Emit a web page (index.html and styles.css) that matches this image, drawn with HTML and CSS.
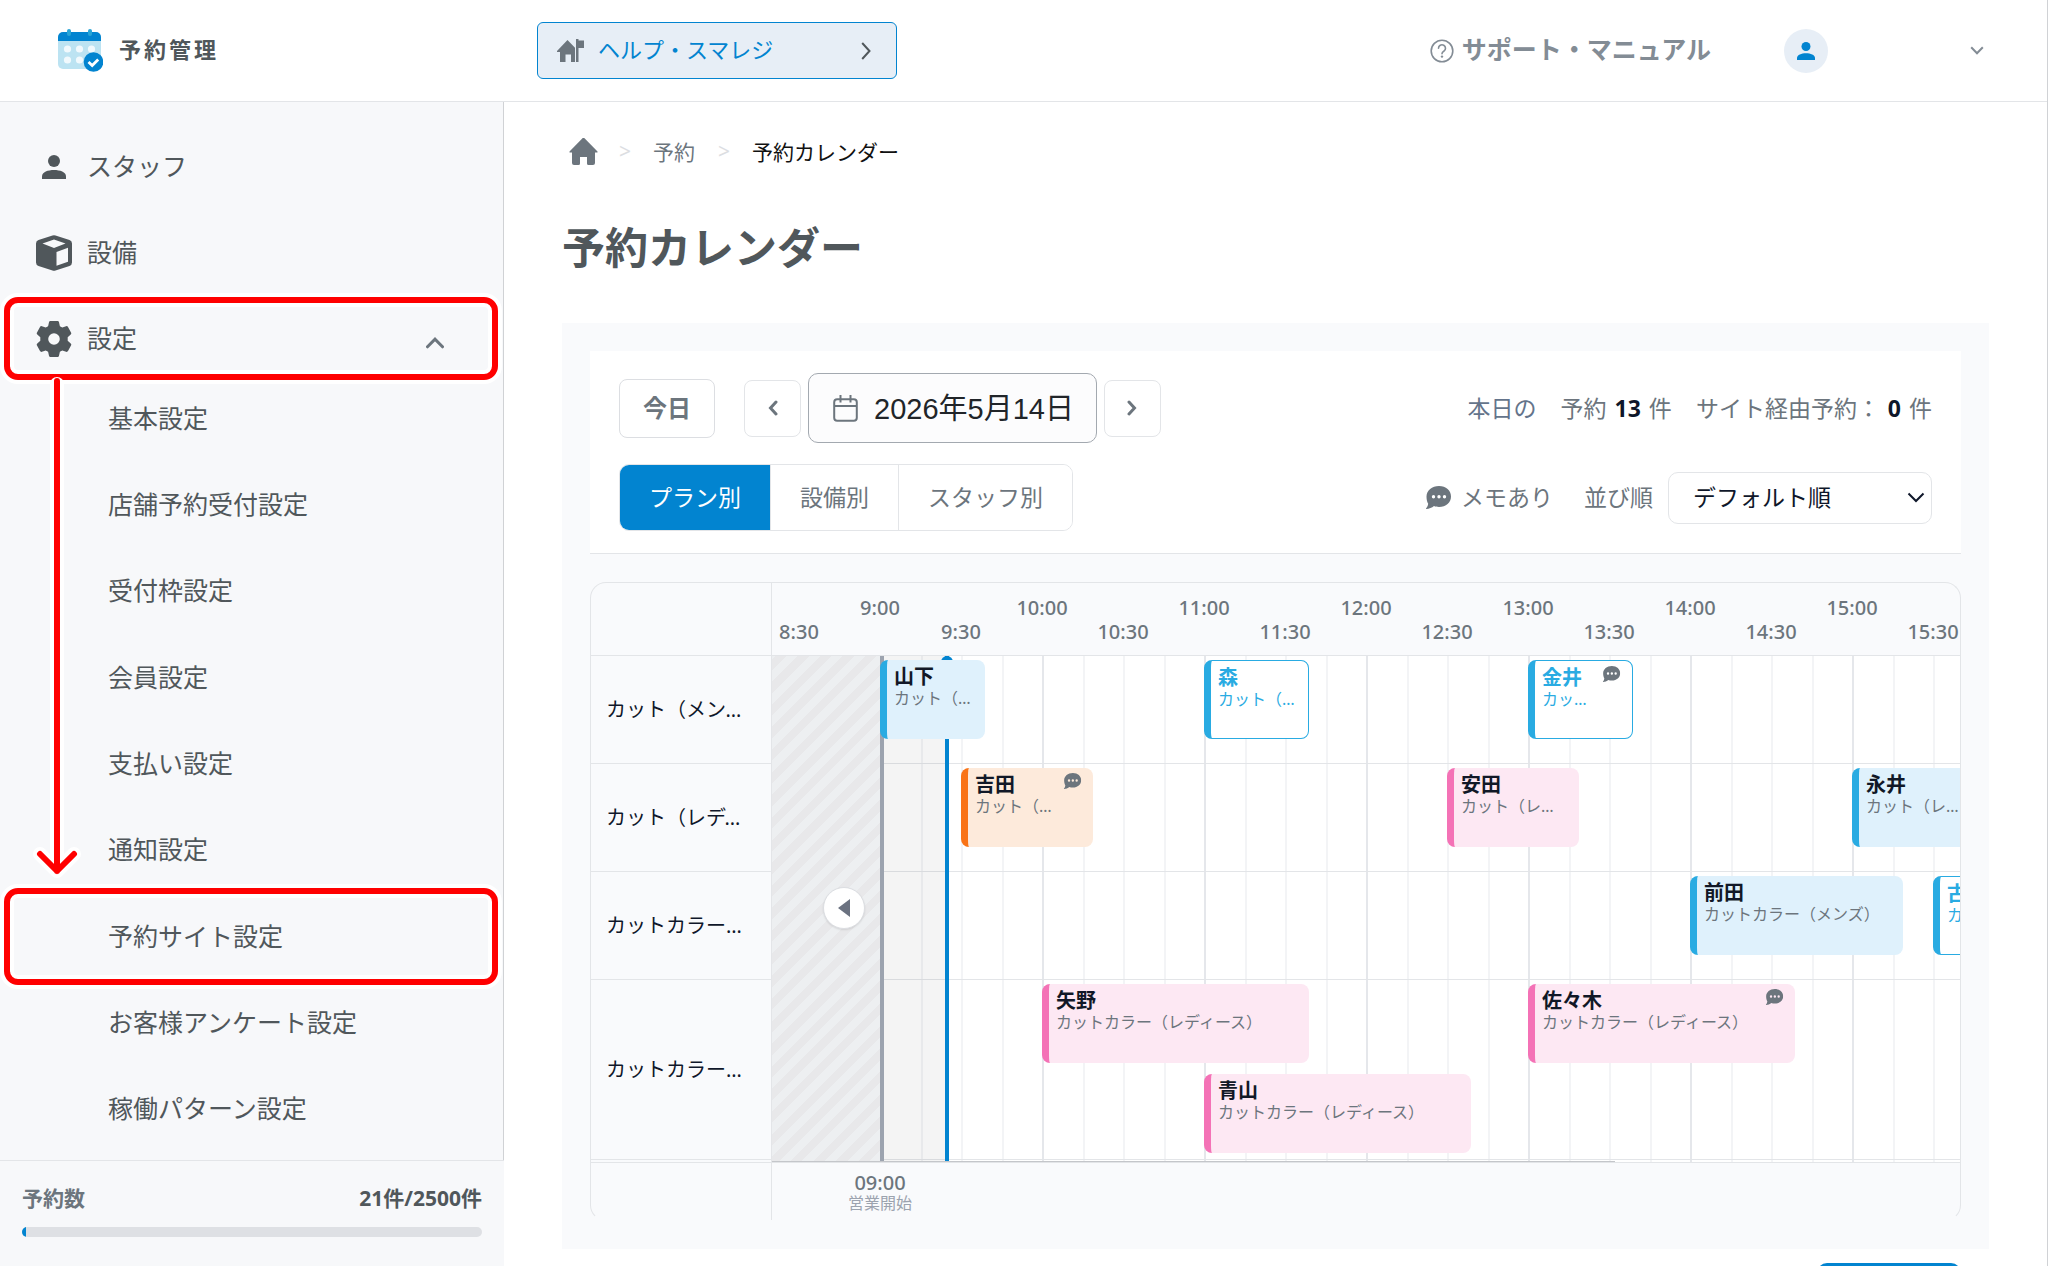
FILE: index.html
```html
<!DOCTYPE html>
<html lang="ja">
<head>
<meta charset="utf-8">
<title>予約カレンダー</title>
<link rel="stylesheet" href="styles.css">
</head>
<body>
<svg class="defs" width="0" height="0" aria-hidden="true">
  <symbol id="i-person" viewBox="0 0 24 24"><circle cx="12" cy="6" r="6"/><path d="M0 24v-2.600C0 17 6 15 12 15s12 2 12 6.400V24z"/></symbol>
  <symbol id="i-home" viewBox="0 0 29 27"><path d="M13 .7a2 2 0 0 1 3 0L28.500 13.500v1H26V25a2 2 0 0 1-2 2h-4.500a1.500 1.500 0 0 1-1.500-1.500V19h-7v6.500A1.500 1.500 0 0 1 9.500 27H5a2 2 0 0 1-2-2V14.500H.5v-1z"/></symbol>
  <symbol id="i-memo" viewBox="0 0 25 23"><path fill-rule="evenodd" d="M13 0c7 0 12 4.500 12 10.500S20 21 13 21c-2 0-3.500-.3-5-.9C6 21.800 3 23 .3 23c-.4 0-.4-.5-.1-.8 1-1.100 1.800-2.700 2-4.400C1 15.800.5 13.200.5 10.500.5 4.500 6 0 13 0zM7.500 9a1.700 1.700 0 1 0 0 3.400 1.700 1.700 0 0 0 0-3.400zM13 9a1.700 1.700 0 1 0 0 3.400A1.700 1.700 0 0 0 13 9zm5.500 0a1.700 1.700 0 1 0 0 3.400 1.700 1.700 0 0 0 0-3.400z"/></symbol>
</svg>

<header class="topbar">
  <a class="brand" href="#">
    <svg class="brand-icon" viewBox="0 0 45 43" aria-hidden="true">
      <rect x="0" y="4" width="43" height="36" rx="5" fill="#bce3f2"/>
      <path d="M0 12V8a5 5 0 0 1 5-5h33a5 5 0 0 1 5 5v4z" fill="#0284d0"/>
      <rect x="9" y="0" width="4" height="7" rx="2" fill="#2aa5d6"/>
      <rect x="30" y="0" width="4" height="7" rx="2" fill="#2aa5d6"/>
      <g fill="#f1f9fd"><circle cx="9.500" cy="20" r="3.600"/><circle cx="21.500" cy="20" r="3.600"/><circle cx="33.500" cy="20" r="3.600"/><circle cx="9.500" cy="31" r="3.600"/><circle cx="21.500" cy="31" r="3.600"/></g>
      <circle cx="35.500" cy="33" r="9.800" fill="#0284d0"/>
      <path d="M30.500 33l3.700 3.500 6-6" fill="none" stroke="#fff" stroke-width="2.800"/>
    </svg>
    <span class="brand-name">予約管理</span>
  </a>
  <button class="shop" type="button">
    <svg class="shop-icon" viewBox="0 0 27 23" aria-hidden="true"><path d="M10.500 1L18 8.800V23h-4v-7.500H8.500V23H3V13H0v-1z"/><path d="M19 0h2.500v1.500H27V9h-5.500v14H19z"/></svg>
    <span class="shop-name">ヘルプ・スマレジ</span>
    <svg class="shop-arrow" viewBox="0 0 10 18" aria-hidden="true"><path d="M1.200 1l7.300 8-7.300 8"/></svg>
  </button>
  <a class="support" href="#">
    <svg class="support-icon" viewBox="0 0 24 24" aria-hidden="true"><circle cx="12" cy="12" r="10.800"/><path d="M8.500 9.300a3.500 3.500 0 1 1 5.300 3c-1.200.7-1.800 1.200-1.800 2.500"/><circle class="dot" cx="12" cy="17.600" r="1.200"/></svg>
    <span class="support-name">サポート・マニュアル</span>
  </a>
  <button class="account" type="button" aria-label="アカウント">
    <span class="avatar"><svg viewBox="0 0 24 24" aria-hidden="true"><use href="#i-person"/></svg></span>
    <svg class="caret" viewBox="0 0 14 9" aria-hidden="true"><path d="M1.200 1.200L7 7.200l5.800-6"/></svg>
  </button>
</header>

<div class="layout">
  <aside class="sidebar">
    <nav class="menu">
      <a class="item" href="#"><span class="item-icon"><svg class="i24" viewBox="0 0 24 24" aria-hidden="true"><use href="#i-person"/></svg></span>スタッフ</a>
      <a class="item" href="#"><span class="item-icon"><svg class="i36" viewBox="0 0 36 36" aria-hidden="true"><path fill-rule="evenodd" d="M16.500.4a5 5 0 0 1 3 0L33.500 5A3.600 3.600 0 0 1 36 8.400v19.200a3.600 3.600 0 0 1-2.500 3.400l-14 4.600a5 5 0 0 1-3 0L2.500 31A3.600 3.600 0 0 1 0 27.600V8.400A3.600 3.600 0 0 1 2.500 5zM18 4.500L6.500 8.500 18 13l11.500-4.500zM20.500 17v13.700L32 26.800V12.700z"/></svg></span>設備</a>
      <a class="item item-open" href="#" aria-expanded="true"><span class="item-icon"><svg class="i36" viewBox="0 0 36 36" aria-hidden="true"><path fill-rule="evenodd" d="M14.500 0h7a1.500 1.500 0 0 1 1.500 1.200l.9 4 2.400 1.300 3.800-1.300a1.600 1.600 0 0 1 1.900.7l3 5.600a1.600 1.600 0 0 1-.3 2l-3 2.800v3.400l3 2.800a1.600 1.600 0 0 1 .3 2l-3 5.600a1.600 1.600 0 0 1-1.900.7l-3.800-1.300-2.400 1.300-.9 4a1.500 1.500 0 0 1-1.500 1.200h-7a1.500 1.500 0 0 1-1.500-1.200l-.9-4-2.400-1.300-3.800 1.300a1.600 1.600 0 0 1-1.900-.7l-3-5.600a1.600 1.600 0 0 1 .3-2l3-2.800v-3.400l-3-2.800a1.600 1.600 0 0 1-.3-2l3-5.600a1.600 1.600 0 0 1 1.900-.7l3.800 1.300 2.400-1.300.9-4A1.500 1.500 0 0 1 14.500 0zM18 12.200a5.800 5.800 0 1 0 0 11.600 5.800 5.800 0 0 0 0-11.600z"/></svg></span>設定<svg class="item-caret" viewBox="0 0 18 12" aria-hidden="true"><path d="M1.500 9.800L9 2.200l7.500 7.600"/></svg><span class="mark"></span></a>
      <div class="submenu">
        <a href="#">基本設定</a>
        <a href="#">店舗予約受付設定</a>
        <a href="#">受付枠設定</a>
        <a href="#">会員設定</a>
        <a href="#">支払い設定</a>
        <a href="#">通知設定</a>
        <a href="#">予約サイト設定<span class="mark"></span></a>
        <a href="#">お客様アンケート設定</a>
        <a href="#">稼働パターン設定</a>
        <svg class="arrow" viewBox="0 0 50 508" aria-hidden="true">
          <path class="arrow-halo" d="M25 9v487M8 479l17 17 17-17"/>
          <path class="arrow-line" d="M25 6v490M8 479l17 17 17-17"/>
        </svg>
      </div>
    </nav>
    <div class="usage">
      <div class="usage-row"><span class="usage-label">予約数</span><span class="usage-value">21件/2500件</span></div>
      <div class="bar"><div class="bar-fill" style="width:0.84%"></div></div>
    </div>
  </aside>

  <main class="main">
    <nav class="crumbs" aria-label="パンくず">
      <a class="crumb-home" href="#" aria-label="ホーム"><svg viewBox="0 0 29 27" aria-hidden="true"><use href="#i-home"/></svg></a>
      <span class="sep">&gt;</span>
      <a class="crumb-link" href="#">予約</a>
      <span class="sep">&gt;</span>
      <span class="crumb-now">予約カレンダー</span>
    </nav>
    <h1>予約カレンダー</h1>

    <section class="panel">
      <div class="tools">
        <div class="tools-row">
          <button class="btn today" type="button">今日</button>
          <div class="date-nav">
            <button class="btn step" type="button" aria-label="前の日"><svg viewBox="0 0 10 16" aria-hidden="true"><path d="M8 2L2.500 8 8 14"/></svg></button>
            <button class="btn date" type="button"><svg viewBox="0 0 25 27" aria-hidden="true"><rect x="1.200" y="4.200" width="22.600" height="21.600" rx="3"/><path d="M1.200 11h22.600M7.500 0v7.500M17.500 0v7.500"/></svg><span>2026年5月14日</span></button>
            <button class="btn step" type="button" aria-label="次の日"><svg viewBox="0 0 10 16" aria-hidden="true"><path d="M2 2l5.500 6L2 14"/></svg></button>
          </div>
          <div class="stats">
            <span class="stats-day">本日の</span>
            <span>予約 <b>13</b> 件</span>
            <span>サイト経由予約： <b>0</b> 件</span>
          </div>
        </div>
        <div class="tools-row">
          <div class="tabs">
            <button class="active" type="button">プラン別</button>
            <button type="button">設備別</button>
            <button type="button">スタッフ別</button>
          </div>
          <div class="filters">
            <span class="memo-key"><svg viewBox="0 0 25 23" aria-hidden="true"><use href="#i-memo"/></svg><span>メモあり</span></span>
            <label for="order">並び順</label>
            <span class="select">
              <select id="order"><option>デフォルト順</option></select>
              <svg viewBox="0 0 18 11" aria-hidden="true"><path d="M1.500 1.500L9 9l7.500-7.500"/></svg>
            </span>
          </div>
        </div>
      </div>

      <div class="board">
        <div class="corner"></div>
        <div class="hours">
          <span class="half c1">8:30</span><span class="c4">9:00</span><span class="half c7">9:30</span><span class="c10">10:00</span><span class="half c13">10:30</span><span class="c16">11:00</span><span class="half c19">11:30</span><span class="c22">12:00</span><span class="half c25">12:30</span><span class="c28">13:00</span><span class="half c31">13:30</span><span class="c34">14:00</span><span class="half c37">14:30</span><span class="c40">15:00</span><span class="half c43">15:30</span>
        </div>

        <div class="labels">
          <div class="label"><span>カット（メンズ）</span></div>
          <div class="label"><span>カット（レディース）</span></div>
          <div class="label"><span>カットカラー（メンズ）</span></div>
          <div class="label tall"><span>カットカラー（レディース）</span></div>
        </div>

        <div class="lanes">
          <div class="lane">
            <article class="event blue c5 w4"><h2>山下</h2><p>カット（メンズ）</p></article>
            <article class="event open c17 w4"><h2>森</h2><p>カット（メンズ）</p></article>
            <article class="event open memo c29 w4"><h2>金井</h2><p>カット（メンズ）</p><svg viewBox="0 0 25 23" aria-label="メモあり"><use href="#i-memo"/></svg></article>
          </div>
          <div class="lane">
            <article class="event orange memo c8 w5"><h2>吉田</h2><p>カット（レディース）</p><svg viewBox="0 0 25 23" aria-label="メモあり"><use href="#i-memo"/></svg></article>
            <article class="event pink c26 w5"><h2>安田</h2><p>カット（レディース）</p></article>
            <article class="event blue c41 w5"><h2>永井</h2><p>カット（レディース）</p></article>
          </div>
          <div class="lane">
            <article class="event blue c35 w8"><h2>前田</h2><p>カットカラー（メンズ）</p></article>
            <article class="event open c44 w8"><h2>古川</h2><p>カットカラー（メンズ）</p></article>
          </div>
          <div class="lane tall">
            <article class="event pink c11 w10"><h2>矢野</h2><p>カットカラー（レディース）</p></article>
            <article class="event pink memo c29 w10"><h2>佐々木</h2><p>カットカラー（レディース）</p><svg viewBox="0 0 25 23" aria-label="メモあり"><use href="#i-memo"/></svg></article>
            <article class="event pink second c17 w10"><h2>青山</h2><p>カットカラー（レディース）</p></article>
          </div>
          <div class="closed"></div>
          <div class="past"></div>
          <div class="now"></div>
          <button class="back" type="button" aria-label="前の時間帯"><svg viewBox="0 0 12 18" aria-hidden="true"><path d="M12 0v18L0 9z"/></svg></button>
          <div class="scroll"></div>
        </div>

        <div class="foot-corner"></div>
        <div class="foot">
          <div class="opening"><strong>09:00</strong><span>営業開始</span></div>
        </div>
      </div>
    </section>
    <div class="actions"><button class="primary" type="button" aria-label="予約を追加"></button></div>
  </main>
</div>
</body>
</html>
```

FILE: styles.css
```css
*, *::before, *::after { box-sizing: border-box; }

body {
  margin: 0;
  height: 100vh;
  overflow: hidden;
  display: flex;
  flex-direction: column;
  border-right: 1px solid #d0d2d5;
  background: #fff;
  color: #50575b;
  font-family: "Noto Sans", "Noto Sans CJK JP", sans-serif;
}
a { color: inherit; text-decoration: none; }
button, select { font: inherit; color: inherit; cursor: pointer; padding: 0; }
h1, h2, p { margin: 0; }
svg { display: block; flex: none; fill: currentColor; }
.defs { position: absolute; }

/* top bar */
.topbar {
  flex: none;
  display: flex;
  align-items: center;
  height: 102px;
  border-bottom: 1px solid #e3e5e8;
}
.brand { flex: none; width: 537px; padding-left: 58px; display: flex; align-items: center; gap: 16px; }
.brand-icon { width: 45px; height: 43px; }
.brand-name { font-size: 22px; font-weight: 700; letter-spacing: 3px; }
.brand-name, .shop-name, .support-name { padding-bottom: 5px; }
.shop {
  display: flex;
  align-items: center;
  width: 360px;
  height: 57px;
  padding: 0 25px 0 19px;
  border: 1px solid #0284d0;
  border-radius: 6px;
  background: #e7eef6;
  color: #0284d0;
  font-size: 22px;
  text-align: left;
}
.shop-name { flex: 1; margin-left: 14px; }
.shop-icon { width: 27px; height: 23px; color: #6c757d; }
.shop-arrow { width: 10px; height: 18px; fill: none; stroke: #50575b; stroke-width: 2; }
.support {
  margin-left: auto;
  display: flex;
  align-items: center;
  gap: 8px;
  color: #838c95;
  font-size: 25px;
  font-weight: 700;
}
.support-icon { width: 24px; height: 24px; fill: none; stroke: currentColor; stroke-width: 1.6; stroke-linecap: round; }
.support-icon .dot { fill: currentColor; stroke: none; }
.account {
  display: flex;
  align-items: center;
  justify-content: space-between;
  width: 200px;
  margin: 0 63px 0 73px;
  border: 0;
  background: none;
}
.avatar {
  display: grid;
  place-items: center;
  width: 44px;
  height: 44px;
  border-radius: 50%;
  background: #e7eef6;
  color: #0284d0;
}
.avatar svg { width: 18px; height: 18px; }
.caret { width: 14px; height: 9px; fill: none; stroke: #838c95; stroke-width: 2; }

/* page columns */
.layout { flex: 1; min-height: 0; display: flex; }

/* sidebar */
.sidebar { flex: none; width: 504px; display: flex; flex-direction: column; background: #f7f8fa; }
.menu {
  flex: 1;
  min-height: 0;
  display: flex;
  flex-direction: column;
  padding: 28px 0 8px;
  border-right: 1px solid #d0d2d5;
  font-size: 25px;
}
.item { position: relative; flex: none; display: flex; align-items: center; height: 72px; margin-bottom: 14px; padding: 0 0 2px 36px; }
.item-open { margin-bottom: 1px; }
.item-icon { display: grid; place-items: center; width: 36px; margin: 3px 15px 0 0; }
.i24 { width: 24px; height: 24px; }
.i36 { width: 36px; height: 36px; }
.item-caret { width: 18px; height: 12px; margin: 11px 59px 0 auto; fill: none; stroke: #6c757d; stroke-width: 3; stroke-linecap: round; }
.submenu { position: relative; flex: 1; min-height: 0; display: flex; flex-direction: column; }
.submenu a { position: relative; flex: 1; display: flex; align-items: center; padding: 0 0 3px 108px; }
.mark {
  position: absolute;
  inset: -5px 5px -6px 4px;
  border: 6px solid #f00;
  border-radius: 14px;
  box-shadow: 0 0 0 4px #fff, inset 0 0 0 4px #fff;
}
.arrow { position: absolute; left: 32px; top: 0; width: 50px; height: 508px; fill: none; stroke-linecap: round; stroke-linejoin: round; }
.arrow-halo { stroke: #fff; stroke-width: 14; }
.arrow-line { stroke: #f00; stroke-width: 6; }
.usage { flex: none; height: 106px; padding: 20px 22px 0; border-top: 1px solid #e3e5e8; }
.usage-row { display: flex; justify-content: space-between; line-height: 34px; font-size: 21px; font-weight: 700; }
.usage-label { color: #6c757d; }
.bar { height: 10px; margin-top: 12px; border-radius: 5px; background: #dee0e4; overflow: hidden; }
.bar-fill { height: 10px; background: #0284d0; }

/* main column */
.main { flex: 1; min-width: 0; overflow: hidden; padding: 30px 58px 0; }
.crumbs { display: flex; align-items: center; height: 38px; color: #6c757d; font-size: 21px; }
.crumb-home { margin: 0 21px 0 7px; }
.crumb-home svg { width: 29px; height: 27px; }
.sep { margin-right: 22px; color: #dcdee2; }
.crumb-link { margin-right: 23px; }
.crumb-now { color: #111; }
h1 { margin-top: 50px; font-size: 43px; line-height: 56px; font-weight: 700; }

.panel { margin-top: 47px; padding: 28px; background: #f9fafc; }
.tools {
  display: flex;
  flex-direction: column;
  gap: 21px;
  padding: 22px 29px;
  border-bottom: 1px solid #e3e5e8;
  background: #fff;
  color: #6c757d;
  font-size: 23px;
}
.tools-row { display: flex; align-items: center; justify-content: space-between; }
.btn { display: grid; place-items: center; border: 1px solid #e3e5e8; border-radius: 8px; background: #fff; }
.today { width: 96px; height: 59px; padding-bottom: 4px; border-color: #dcdee2; font-size: 24px; font-weight: 700; }
.date-nav { display: flex; align-items: center; gap: 7px; margin: 0 auto 0 29px; }
.step { width: 57px; height: 57px; }
.step svg { width: 10px; height: 16px; fill: none; stroke: #6c757d; stroke-width: 3; stroke-linecap: round; }
.date {
  display: flex;
  align-items: center;
  gap: 16px;
  height: 70px;
  padding: 0 22px 0 24px;
  border-color: #a3a9b0;
  border-radius: 10px;
  background: #fcfcfd;
  color: #212529;
  font-family: "Liberation Sans", "Noto Sans CJK JP", sans-serif;
  font-size: 29px;
}
.date span { padding-bottom: 5px; }
.date svg { width: 25px; height: 27px; fill: none; stroke: #6c757d; stroke-width: 2; }
.stats { display: flex; gap: 24px; padding-bottom: 3px; }
.stats-day { color: #64748b; }
.stats b { margin: 0 2px; color: #0f172a; }
.tabs { display: flex; border: 1px solid #e3e5e8; border-radius: 10px; overflow: hidden; }
.tabs button { height: 65px; padding: 0 29px 3px; border: 0; border-left: 1px solid #e3e5e8; background: #fff; }
.tabs .active { border-left: 0; background: #0284d0; color: #fff; }
.filters { display: flex; align-items: center; }
.memo-key { display: flex; align-items: center; gap: 10px; margin-right: 31px; }
.memo-key svg { width: 25px; height: 23px; }
.memo-key span, .filters label { padding-bottom: 3px; }
.select { position: relative; margin-left: 15px; }
.select select {
  display: block;
  width: 264px;
  height: 52px;
  padding: 0 24px 2px;
  border: 1px solid #e3e5e8;
  border-radius: 10px;
  background: #fff;
  color: #0f172a;
  appearance: none;
}
.select svg { position: absolute; right: 7px; top: 20px; width: 18px; height: 11px; fill: none; stroke: #0f172a; stroke-width: 2; pointer-events: none; }

/* schedule board: each timeline column is ten minutes, starting at 8:20 */
.board {
  display: grid;
  grid-template-columns: 181px minmax(0, 1fr);
  margin-top: 28px;
  border: 1px solid #e3e5e8;
  border-bottom-color: transparent;
  border-radius: 16px;
  overflow: hidden;
}
.corner, .labels, .foot-corner { border-right: 1px solid #e3e5e8; }
.corner, .hours { height: 73px; border-bottom: 1px solid #e3e5e8; }
.hours, .lane, .foot { display: grid; grid-template-columns: repeat(52, 27px); overflow: hidden; }
.hours { grid-template-rows: 24px 24px; padding-top: 13px; color: #6c757d; font-size: 20px; line-height: 24px; font-weight: 500; }
.hours span { grid-row: 1; grid-column-end: span 2; justify-self: center; white-space: nowrap; }
.hours .half { grid-row: 2; }
.label { display: flex; align-items: center; height: 108px; padding: 0 15px 2px; border-bottom: 1px solid #e3e5e8; color: #0f172a; font-size: 20px; }
.label span { overflow: hidden; text-overflow: ellipsis; white-space: nowrap; }
.lanes {
  position: relative;
  min-width: 0;
  padding-bottom: 2px;
  background:
    repeating-linear-gradient(90deg, transparent 0 108px, #e5e7eb 108px 110px, transparent 110px 162px),
    repeating-linear-gradient(90deg, transparent 0 27px, #f3f4f6 27px 29px, transparent 29px 68px, #f3f4f6 68px 70px, transparent 70px 81px),
    #fff;
}
.lane { grid-template-rows: 90px; height: 108px; padding-top: 4px; border-bottom: 1px solid #e3e5e8; }
.lane.tall, .label.tall { height: 180px; }

.event {
  position: relative;
  z-index: 1;
  grid-row: 1;
  height: 79px;
  min-width: 0;
  margin-right: 3px;
  padding: 5px 11px 0 7px;
  border-left: 7px solid;
  border-radius: 8px;
}
.event.second { grid-row: 2; }
.event h2 { color: #111827; font-size: 20px; line-height: 24px; font-weight: 700; }
.event p { color: #6c757d; font-size: 16px; line-height: 18px; overflow: hidden; text-overflow: ellipsis; white-space: nowrap; }
.event.memo { padding-right: 31px; }
.event svg { position: absolute; right: 11px; top: 5px; width: 19px; height: 16px; color: #6c757d; }
.blue { border-color: #29abe2; background: #dff1fc; }
.pink { border-color: #f472b6; background: #fde8f3; }
.orange { border-color: #f97316; background: #fdeadb; }
.open { border: 1px solid #29abe2; border-left-width: 7px; background: #fff; }
.open h2, .open p { color: #29abe2; }

.c1 { grid-column-start: 1; } .c4 { grid-column-start: 4; } .c5 { grid-column-start: 5; }
.c7 { grid-column-start: 7; } .c8 { grid-column-start: 8; } .c10 { grid-column-start: 10; }
.c11 { grid-column-start: 11; } .c13 { grid-column-start: 13; } .c16 { grid-column-start: 16; }
.c17 { grid-column-start: 17; } .c19 { grid-column-start: 19; } .c22 { grid-column-start: 22; }
.c25 { grid-column-start: 25; } .c26 { grid-column-start: 26; } .c28 { grid-column-start: 28; }
.c29 { grid-column-start: 29; } .c31 { grid-column-start: 31; } .c34 { grid-column-start: 34; }
.c35 { grid-column-start: 35; } .c37 { grid-column-start: 37; } .c40 { grid-column-start: 40; }
.c41 { grid-column-start: 41; } .c43 { grid-column-start: 43; } .c44 { grid-column-start: 44; }
.w4 { grid-column-end: span 4; } .w5 { grid-column-end: span 5; }
.w8 { grid-column-end: span 8; } .w10 { grid-column-end: span 10; }

/* time state drawn over the lanes */
.closed {
  position: absolute;
  inset: 0 auto 0 0;
  width: 112px;
  border-right: 4px solid #9ca3af;
  background: repeating-linear-gradient(-45deg, #edeff1 0 8px, #e8e8ea 8px 16px);
}
.past { position: absolute; inset: 0 auto 0 112px; width: 61px; background: rgba(0, 0, 0, 0.045); }
.now { position: absolute; inset: 0 auto 0 173px; width: 4px; background: #0284d0; }
.now::before { content: ""; position: absolute; left: -4px; top: 0; width: 12px; height: 12px; border-radius: 50%; background: #0284d0; }
.back {
  position: absolute;
  left: 51px;
  top: calc(50% - 22px);
  display: grid;
  place-items: center;
  width: 42px;
  height: 42px;
  border: 1px solid #dcdee2;
  border-radius: 50%;
  background: #fff;
  color: #6b7280;
  box-shadow: 0 1px 2px rgba(0, 0, 0, 0.1);
}
.back svg { width: 12px; height: 18px; }
.scroll { position: absolute; left: 0; bottom: 0; width: 71%; height: 1px; background: #c4c6ca; }

.foot-corner, .foot { height: 58px; border-top: 1px solid #e3e5e8; }
.opening { grid-column: 3 / span 4; display: flex; flex-direction: column; align-items: center; padding-top: 10px; }
.opening strong { color: #6c757d; font-size: 20px; line-height: 20px; font-weight: 500; }
.opening span { color: #9ca3af; font-size: 16px; line-height: 20px; }

.actions { display: flex; justify-content: flex-end; padding: 14px 28px 0; }
.primary { width: 144px; height: 58px; border: 0; border-radius: 10px; background: #0284d0; }
```
